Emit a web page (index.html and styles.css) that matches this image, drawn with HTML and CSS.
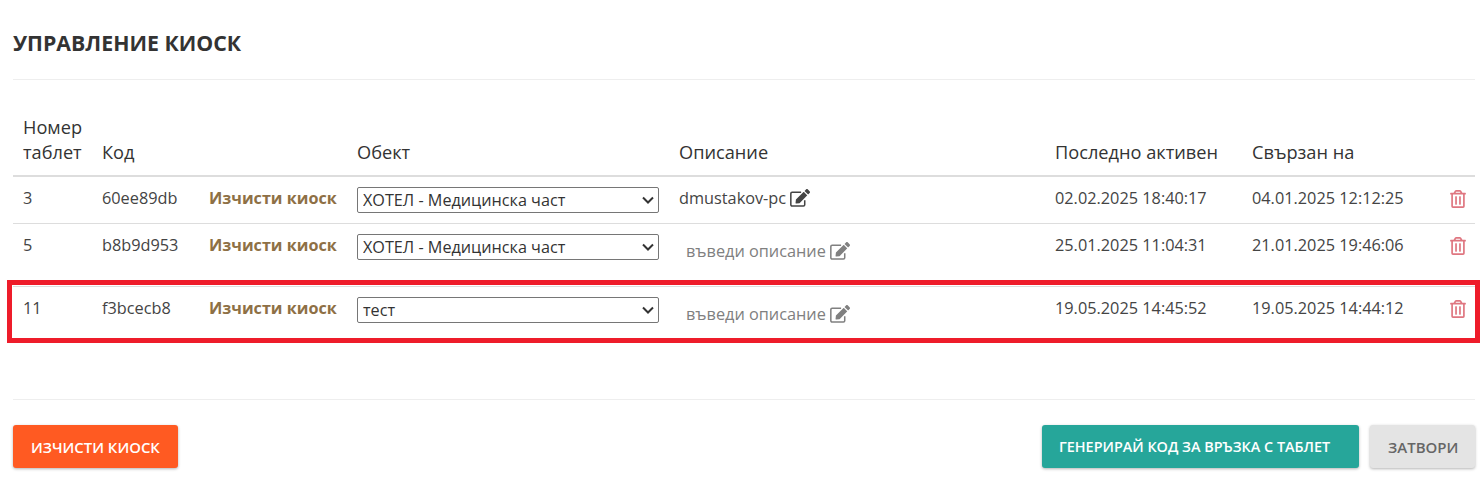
FILE: index.html
```html
<!DOCTYPE html>
<html lang="bg">
<head>
<meta charset="utf-8">
<title>Управление киоск</title>
<link rel="stylesheet" href="styles.css">
</head>
<body>
<svg class="defs" width="0" height="0" aria-hidden="true">
  <symbol id="edit" viewBox="0 0 576 512"><path d="M402.6 83.2l90.2 90.2c3.8 3.8 3.8 10 0 13.8L274.4 405.6l-92.8 10.3c-12.4 1.4-22.9-9.1-21.5-21.5l10.3-92.8L388.8 83.2c3.8-3.8 10-3.8 13.8 0zm162-22.9l-48.8-48.8c-15.2-15.2-39.9-15.2-55.2 0l-35.4 35.4c-3.8 3.8-3.8 10 0 13.8l90.2 90.2c3.8 3.8 10 3.8 13.8 0l35.4-35.4c15.2-15.3 15.2-40 0-55.2z"/><path class="box" d="M424 320V452a36 36 0 0 1-36 36H60a36 36 0 0 1-36-36V124a36 36 0 0 1 36-36H320"/></symbol>
  <symbol id="trash" viewBox="0 0 448 512"><path d="M268 416h24a12 12 0 0 0 12-12V188a12 12 0 0 0-12-12h-24a12 12 0 0 0-12 12v216a12 12 0 0 0 12 12zM432 80h-82.41l-34-56.7A48 48 0 0 0 274.41 0H173.59a48 48 0 0 0-41.16 23.3L98.41 80H16A16 16 0 0 0 0 96v16a16 16 0 0 0 16 16h16v336a48 48 0 0 0 48 48h288a48 48 0 0 0 48-48V128h16a16 16 0 0 0 16-16V96a16 16 0 0 0-16-16zM171.84 50.91A6 6 0 0 1 177 48h94a6 6 0 0 1 5.15 2.91L293.61 80H154.39zM368 464H80V128h288zm-212-48h24a12 12 0 0 0 12-12V188a12 12 0 0 0-12-12h-24a12 12 0 0 0-12 12v216a12 12 0 0 0 12 12z"/></symbol>
</svg>
<main class="modal">
  <h1 class="title">УПРАВЛЕНИЕ КИОСК</h1>
  <div class="content">
    <table class="kiosks">
      <colgroup>
        <col class="c1"><col class="c2"><col class="c3"><col class="c4"><col class="c5"><col class="c6"><col class="c7"><col class="c8">
      </colgroup>
      <thead>
        <tr><th>Номер таблет</th><th>Код</th><th></th><th>Обект</th><th>Описание</th><th>Последно активен</th><th>Свързан на</th><th></th></tr>
      </thead>
      <tbody>
        <tr class="row-short">
          <td>3</td><td>60ee89db</td><td><a class="clear">Изчисти киоск</a></td>
          <td><select class="obj"><option>ХОТЕЛ - Медицинска част</option></select></td>
          <td><span class="desc">dmustakov-pc</span> <svg class="ic-edit"><use href="#edit"/></svg></td>
          <td>02.02.2025 18:40:17</td><td>04.01.2025 12:12:25</td>
          <td><svg class="ic-trash"><use href="#trash"/></svg></td>
        </tr>
        <tr class="row-tall">
          <td>5</td><td>b8b9d953</td><td><a class="clear">Изчисти киоск</a></td>
          <td><select class="obj"><option>ХОТЕЛ - Медицинска част</option></select></td>
          <td><span class="desc-empty">въведи описание <svg class="ic-edit"><use href="#edit"/></svg></span></td>
          <td>25.01.2025 11:04:31</td><td>21.01.2025 19:46:06</td>
          <td><svg class="ic-trash"><use href="#trash"/></svg></td>
        </tr>
        <tr class="row-tall">
          <td>11</td><td>f3bcecb8</td><td><a class="clear">Изчисти киоск</a></td>
          <td><select class="obj"><option>тест</option></select></td>
          <td><span class="desc-empty">въведи описание <svg class="ic-edit"><use href="#edit"/></svg></span></td>
          <td>19.05.2025 14:45:52</td><td>19.05.2025 14:44:12</td>
          <td><svg class="ic-trash"><use href="#trash"/></svg></td>
        </tr>
      </tbody>
    </table>
  </div>
  <footer class="actions">
    <button class="btn btn-orange">ИЗЧИСТИ КИОСК</button>
    <div class="right">
      <button class="btn btn-teal">ГЕНЕРИРАЙ КОД ЗА ВРЪЗКА С ТАБЛЕТ</button>
      <button class="btn btn-grey">ЗАТВОРИ</button>
    </div>
  </footer>
</main>
<div class="highlight"></div>
</body>
</html>
```
FILE: styles.css
```css
* { box-sizing: border-box; }
html, body { margin: 0; padding: 0; background: #fff; }
body { font-family: "Open Sans", sans-serif; color: #333; position: relative; height: 482px; overflow: hidden; }
.defs { position: absolute; }
.modal { padding: 0 8px 0 13px; }
.title { margin: 0; height: 80px; padding-top: 29px; font-size: 21.3px; line-height: 28px; font-weight: 700; color: #333; border-bottom: 1px solid #eee; }
.content { height: 320px; padding-top: 35px; border-bottom: 1px solid #eee; }
.kiosks { width: 1462px; table-layout: fixed; border-collapse: collapse; }
.c1 { width: 79px; } .c2 { width: 107px; } .c3 { width: 148px; } .c4 { width: 322px; }
.c5 { width: 376px; } .c6 { width: 197px; } .c7 { width: 198px; } .c8 { width: 35px; }
th { padding: 0 0 11px 10px; font-size: 18.2px; line-height: 24.5px; font-weight: 500; text-align: left; vertical-align: bottom; color: #333; border-bottom: 2px solid #ddd; }
td { padding: 0 0 0 10px; font-size: 16.3px; color: #444; vertical-align: top; border-bottom: 1px solid #ddd; white-space: nowrap; }
tbody tr:last-child td { border-bottom: 0; }
.row-short td, .row-tall td { padding-top: 10px; line-height: 22px; }
.row-short { height: 47px; }
.row-tall { height: 63px; }
.clear { font-weight: 700; color: #8e7045; font-size: 16.2px; }
.obj { display: block; width: 302px; height: 26px; padding: 0 0 0 5px; font-family: "Open Sans", sans-serif; font-size: 16.2px; color: #333; border: 1px solid #767676; border-radius: 2px; appearance: none; background: #fff url("data:image/svg+xml,%3Csvg xmlns='http://www.w3.org/2000/svg' width='12' height='8'%3E%3Cpath d='M1 1.5l5 5 5-5' fill='none' stroke='%23333' stroke-width='2'/%3E%3C/svg%3E") no-repeat right 4px center; }
.desc { color: #444; }
.desc-empty { display: inline-block; margin: 6px 0 0 7px; color: #808080; }
.ic-edit { width: 20px; height: 18px; fill: currentColor; vertical-align: -3px; }
.box { fill: none; stroke: currentColor; stroke-width: 44; }
.ic-trash { width: 16px; height: 18px; margin: 3px 0 0 0; fill: #df7680; display: block; }
.actions { display: flex; justify-content: space-between; padding-top: 25px; }
.right { display: flex; gap: 11px; }
.btn { height: 43px; padding: 0 0 0 18px; border: 0; border-radius: 3px; text-align: left; font-family: "Open Sans", sans-serif; font-size: 14.9px; font-weight: 600; box-shadow: 0 1px 3px rgba(0,0,0,.3); }
.btn-orange { width: 165px; background: #ff5a22; color: #fff; }
.btn-teal { width: 317px; padding-left: 17px; font-size: 14.4px; background: #26a69a; color: #fff; }
.btn-grey { width: 105px; font-size: 15px; background: #e4e4e4; color: #666; }
.highlight { position: absolute; left: 7px; top: 280px; width: 1473px; height: 63px; border: 5px solid #ee1c2a; pointer-events: none; }
```
